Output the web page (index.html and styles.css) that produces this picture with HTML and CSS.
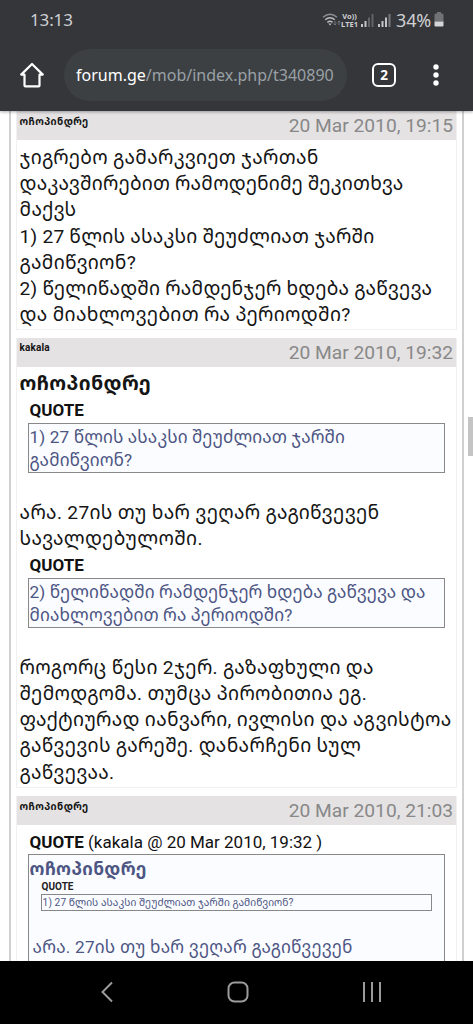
FILE: index.html
```html
<!DOCTYPE html>
<html lang="ka">
<head>
<meta charset="utf-8">
<title>forum.ge</title>
<link rel="stylesheet" href="styles.css">
</head>
<body>
<header class="chrome">
  <div class="status">
    <span class="clock">13:13</span>
    <div class="indicators">
      <svg class="wifi" width="20" height="16" viewBox="0 0 20 16" fill="none" stroke="#bcbdc0" stroke-width="1.5"><path d="M1 5.2Q8 -.8 15 5.2" stroke="#8d8e92"/><path d="M3.2 7.8Q8 3.6 12.8 7.8M5.4 10.3Q8 8.2 10.6 10.3"/><path d="M6.3 11.5L8 13.5l1.7-2z" fill="#bcbdc0" stroke="none"/><path d="M13 9v4m-1.4-1.4L13 13l1.4-1.4M17 13V9m-1.4 1.4L17 9l1.4 1.4" stroke="#77787c" stroke-width="1"/></svg>
      <span class="volte"><span>Vo))</span><span>LTE1</span></span>
      <svg class="signal" width="13" height="14" viewBox="0 0 13 14"><path d="M0 11h2v3H0zM3.5 8h2v6h-2z" fill="#c4c5c8"/><path d="M7 4.5h2V14H7zM10.5 1h2v13h-2z" fill="#626368"/></svg>
      <svg class="signal two" width="13" height="14" viewBox="0 0 13 14"><path d="M0 11h2v3H0zM3.5 8h2v6h-2zM7 4.5h2V14H7z" fill="#c4c5c8"/><path d="M10.5 1h2v13h-2z" fill="#77787c"/></svg>
      <span class="percent">34%</span>
      <svg width="10" height="15" viewBox="0 0 10 15"><path d="M3 0h4v1.5h1.2Q9.5 1.5 9.5 3v6.5h-9V3Q.5 1.5 1.8 1.5H3z" fill="#717276"/><path d="M.5 9.5h9v4q0 1-1 1h-7q-1 0-1-1z" fill="#d5d5d8"/></svg>
    </div>
  </div>
  <div class="toolbar">
    <svg class="home" width="26" height="26" viewBox="0 0 26 26" fill="none" stroke="#fff" stroke-width="2.2" stroke-linejoin="round"><path d="M2.2 12.6L13 2l10.8 10.6h-3.3v10.8q0 .9-.9.9H6.4q-.9 0-.9-.9V12.6z"/></svg>
    <div class="address"><span class="host">forum.ge</span><span class="path">/mob/index.php/t340890</span></div>
    <span class="tabs">2</span>
    <svg class="more" width="6" height="22" viewBox="0 0 6 22" fill="#fff"><circle cx="3" cy="3" r="2.7"/><circle cx="3" cy="11" r="2.7"/><circle cx="3" cy="19" r="2.7"/></svg>
  </div>
</header>
<main class="page">
  <div class="thread">
    <article class="post">
      <div class="post-head"><b>ოჩოპინდრე</b><time>20 Mar 2010, 19:15</time></div>
      <div class="post-body">
        <p>ჯიგრებო გამარკვიეთ ჯართან</p>
        <p class="tight">დაკავშირებით რამოდენიმე შეკითხვა</p>
        <p>მაქვს</p>
        <p class="tight">1) 27 წლის ასაკსი შეუძლიათ ჯარში</p>
        <p>გამიწვიონ?</p>
        <p class="tight">2) წელიწადში რამდენჯერ ხდება გაწვევა</p>
        <p>და მიახლოვებით რა პერიოდში?</p>
      </div>
    </article>
    <article class="post">
      <div class="post-head"><b class="latin">kakala</b><time>20 Mar 2010, 19:32</time></div>
      <div class="post-body reply">
        <p class="name">ოჩოპინდრე</p>
        <div class="quote-title"><b>QUOTE</b></div>
        <blockquote class="quote"><p>1) 27 წლის ასაკსი შეუძლიათ ჯარში</p><p>გამიწვიონ?</p></blockquote>
        <p>არა. 27ის თუ ხარ ვეღარ გაგიწვევენ</p>
        <p>სავალდებულოში.</p>
        <div class="quote-title"><b>QUOTE</b></div>
        <blockquote class="quote"><p>2) წელიწადში რამდენჯერ ხდება გაწვევა და</p><p>მიახლოვებით რა პერიოდში?</p></blockquote>
        <p>როგორც წესი 2ჯერ. გაზაფხული და</p>
        <p>შემოდგომა. თუმცა პირობითია ეგ.</p>
        <p>ფაქტიურად იანვარი, ივლისი და აგვისტოა</p>
        <p>გაწვევის გარეშე. დანარჩენი სულ</p>
        <p>გაწვევაა.</p>
      </div>
    </article>
    <article class="post">
      <div class="post-head"><b>ოჩოპინდრე</b><time>20 Mar 2010, 21:03</time></div>
      <div class="post-body last">
        <div class="quote-title"><b>QUOTE</b> (kakala @ 20 Mar 2010, 19:32 )</div>
        <blockquote class="quote outer">
          <p class="name">ოჩოპინდრე</p>
          <div class="nested-title">QUOTE</div>
          <div class="nested">1) 27 წლის ასაკსი შეუძლიათ ჯარში გამიწვიონ?</div>
          <p class="indent">არა. 27ის თუ ხარ ვეღარ გაგიწვევენ</p>
        </blockquote>
      </div>
    </article>
  </div>
  <div class="scrollbar"></div>
</main>
<nav class="navbar">
  <svg width="14" height="22" viewBox="0 0 14 22" fill="none" stroke="#9b9b9b" stroke-width="2"><path d="M12 1.5L2.5 11l9.5 9.5"/></svg>
  <svg width="22" height="22" viewBox="0 0 22 22" fill="none" stroke="#9b9b9b" stroke-width="2"><rect x="1.5" y="1.5" width="19" height="19" rx="6"/></svg>
  <svg width="20" height="20" viewBox="0 0 20 20" fill="none" stroke="#9b9b9b" stroke-width="2"><path d="M2 0v20M10 0v20M18 0v20"/></svg>
</nav>
</body>
</html>
```
FILE: styles.css
```css
* { box-sizing: border-box; }
body { margin: 0; width: 473px; height: 1024px; overflow: hidden; display: flex; flex-direction: column; background: #fff; font-family: Roboto, "Noto Sans Georgian", "DejaVu Sans", sans-serif; color: #151515; }
p, blockquote { margin: 0; }
p, .nested, .quote-title { white-space: nowrap; }
svg { display: block; flex: none; }

.chrome { height: 111px; flex: none; background: #35363a; position: relative; box-shadow: 0 1px 3px #0005; }
.status { height: 39px; padding: 0 29px 0 30px; display: flex; justify-content: space-between; align-items: center; color: #cfd0d3; }
.clock { font: 17px "Noto Sans", sans-serif; letter-spacing: -.15px; }
.indicators { display: flex; align-items: center; }
.wifi { margin-right: -2px; }
.volte { display: flex; flex-direction: column; align-items: center; font: bold 7.5px/8px "Noto Sans", sans-serif; width: 19px; margin-right: 2px; }
.signal { margin-right: 4px; }
.signal.two { margin-right: 5px; }
.percent { font: 18px "Noto Sans", sans-serif; letter-spacing: -.2px; margin-right: 3px; }
.toolbar { height: 72px; display: flex; align-items: center; padding: 0 33px 0 19px; }
.address { width: 283px; height: 52px; margin: -1px 0 0 19px; padding-left: 12px; border-radius: 26px; background: #3c4043; font: 16px/52px "Noto Sans", sans-serif; color: #9aa0a6; white-space: nowrap; }
.host { color: #fff; }
.tabs { width: 24px; height: 24px; margin: 0 37px 0 25px; border: 2.5px solid #fff; border-radius: 6px; color: #fff; font: bold 13.5px/20px "Noto Sans", sans-serif; text-align: center; }

.page { flex: 1; min-height: 0; display: flex; overflow: hidden; }
.thread { width: 455px; margin-left: 9px; border: solid #d0d0d0; border-width: 0 2px; padding: 0 5px 0 4.6px; flex: none; }
.scrollbar { width: 5px; height: 39px; margin: 306px 0 0 auto; background: #c4c4c4; }
.post { border: 1px solid #f1f1f1; border-top: 0; margin-bottom: 8px; }
.post-head { height: 29px; padding: 0 3px; background: #e4e2e3; display: flex; justify-content: space-between; font-size: 10px; line-height: 15px; }
.post-head b { padding-top: 3px; letter-spacing: .4px; }
.post-head .latin { padding-top: 2px; letter-spacing: .1px; }
.post-head time { font-size: 19.2px; line-height: 29px; color: #888; }
.post-body { font-size: 19.2px; padding: 5px 3px 0; height: 189px; }
.post-body p { line-height: 26.2px; height: 26.2px; letter-spacing: .3px; }
.post-body .tight { letter-spacing: .2px; }
.post-body.reply { height: 420px; padding-top: 4.3px; }
.post-body .name { font-weight: bold; font-size: 19.6px; letter-spacing: .4px; }
.quote-title { margin-left: 10px; font-size: 17px; line-height: 27px; height: 26px; color: #111; }
.quote { margin: 0 8px 26.5px; height: 50px; padding: 2px 1px; border: 1px solid #888; background: #fafcff; font-size: 17.2px; color: #4d5583; }
.post-body .quote p { line-height: 23px; height: 23px; letter-spacing: .1px; }
.post-body.last { height: 240px; padding-top: 4px; }
.last .quote-title { height: 25px; }
.post-body .outer { height: 220px; }
.post-body .outer .name { font-size: 17.4px; letter-spacing: .38px; line-height: 25px; }
.nested-title { margin-left: 12px; font-size: 10px; font-weight: bold; line-height: 14px; height: 13px; color: #222; }
.nested { margin: 1px 11px 25px; height: 17px; border: 1px solid #888; padding-left: 1px; font-size: 10.2px; line-height: 15px; letter-spacing: .07px; }
.post-body .quote .indent { padding-left: 3px; letter-spacing: .2px; }

.navbar { height: 63px; flex: none; background: #000; display: flex; justify-content: space-between; align-items: center; padding: 0 91px 2px 100px; }
```
